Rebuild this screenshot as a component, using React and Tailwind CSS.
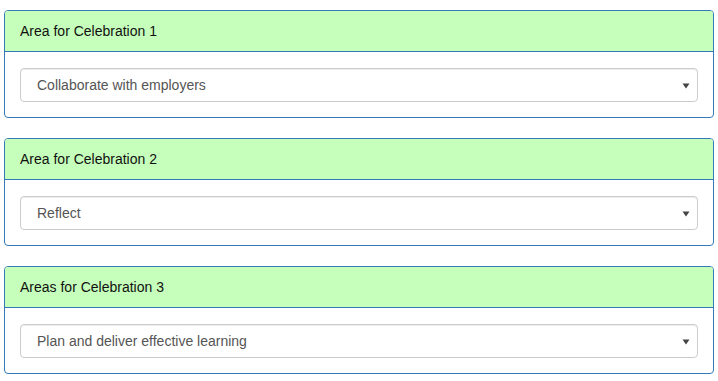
export default function App() {
  const panels = [
    { title: "Area for Celebration 1", value: "Collaborate with employers" },
    { title: "Area for Celebration 2", value: "Reflect" },
    { title: "Areas for Celebration 3", value: "Plan and deliver effective learning" },
  ];
  return (
    <div className="bg-white pt-[10px] px-[4px] w-[718px]" style={{ fontFamily: '"Liberation Sans", Arial, sans-serif' }}>
      {panels.map((p) => (
        <div key={p.title} className="mb-[20px] border border-[#337ab7] rounded-[4px] w-[710px]">
          <div className="h-[41px] flex items-center pt-[1px] px-[15px] bg-[#c6ffbb] border-b border-[#337ab7] rounded-t-[3px] text-[14px] text-[#111]">
            {p.title}
          </div>
          <div className="pt-[16px] pb-[15px] px-[15px]">
            <div className="h-[34px] flex items-center justify-between border border-[#ccc] rounded-[4px] pt-[1px] pl-[16px] pr-[7px] text-[14px] text-[#555] shadow-[inset_0_1px_1px_rgba(0,0,0,0.075)]">
              <span>{p.value}</span>
              <svg width="8" height="6" viewBox="0 0 8 6">
                <path d="M0.5 0.5 L7.5 0.5 L4 5.5 Z" fill="#444" />
              </svg>
            </div>
          </div>
        </div>
      ))}
    </div>
  );
}
